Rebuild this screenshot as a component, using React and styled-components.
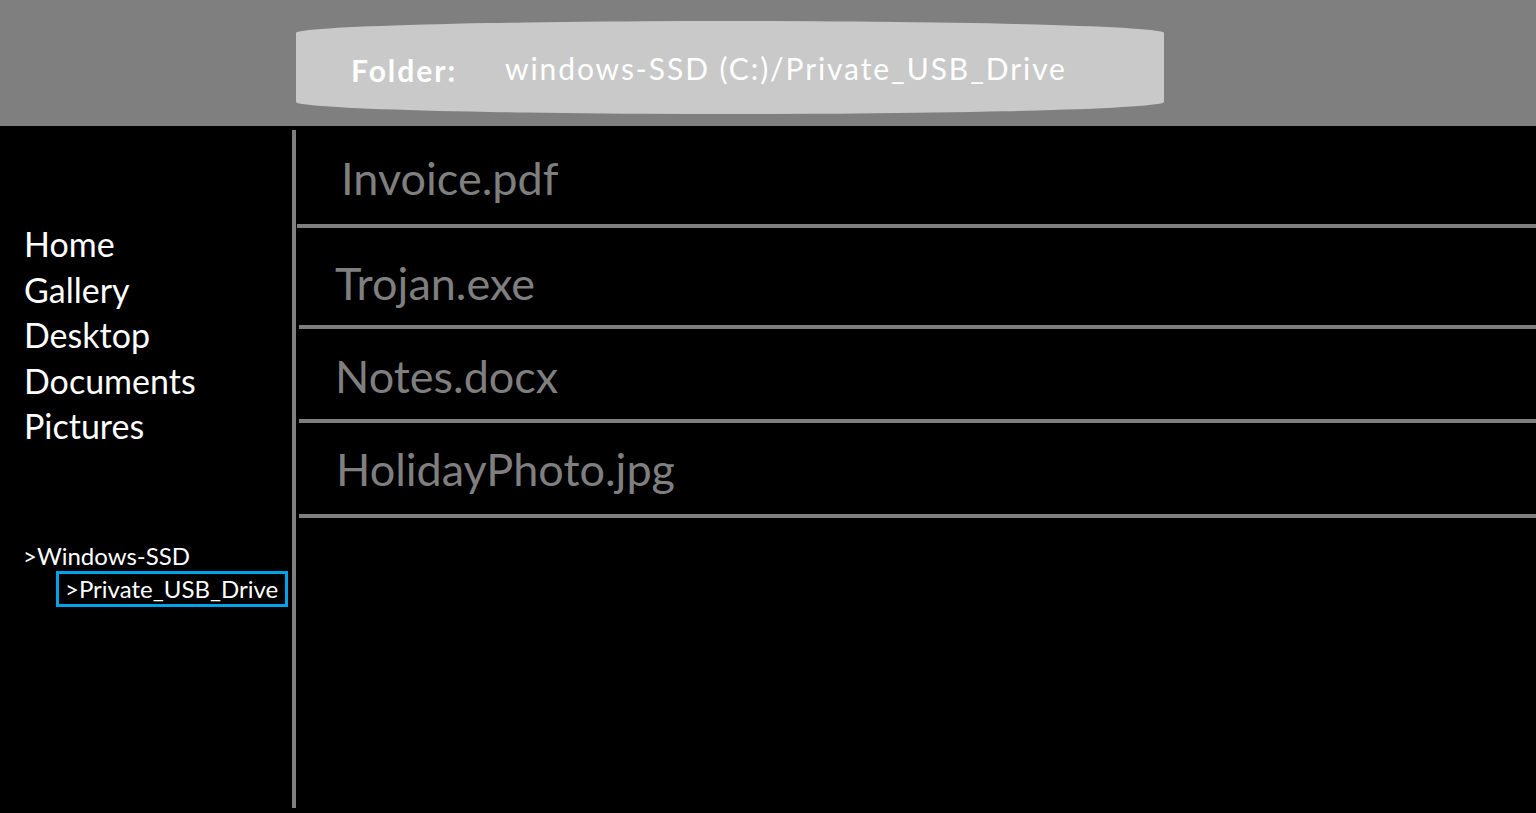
import styled, { createGlobalStyle } from "styled-components";

const GlobalStyle = createGlobalStyle`
  html, body {
    margin: 0;
    padding: 0;
    background: #000;
  }
  body {
    font-family: Lato, "Open Sans", sans-serif;
  }
`;

const Page = styled.div`
  width: 1536px;
  height: 813px;
  display: flex;
  flex-direction: column;
  background: #000;
  overflow: hidden;
`;

const Header = styled.header`
  height: 126px;
  flex-shrink: 0;
  background: #7f7f7f;
  display: flex;
  align-items: flex-start;
  padding-left: 296px;
  padding-top: 21px;
  box-sizing: border-box;
`;

const PathPill = styled.div`
  width: 868px;
  height: 93px;
  background: #c9c9c9;
  border-radius: 50% / 12px;
  display: flex;
  align-items: center;
  padding-left: 55px;
  box-sizing: border-box;
  color: #fff;
  font-size: 30px;
  letter-spacing: 1.9px;
  padding-top: 1px;
`;

const PathLabel = styled.span`
  font-weight: 700;
  width: 154px;
  font-size: 30px;
  letter-spacing: 2px;
  padding-top: 4px;
`;

const Body = styled.div`
  flex: 1;
  display: flex;
`;

const Sidebar = styled.nav`
  width: 292px;
  flex-shrink: 0;
  padding: 95px 0 0 24px;
  box-sizing: border-box;
  color: #fff;
`;

const NavItem = styled.div`
  font-size: 34px;
  line-height: 45.5px;
`;

const Tree = styled.div`
  margin-top: 92px;
  font-size: 24px;
`;

const TreeItem = styled.div`
  line-height: 30px;
  margin-left: ${(p) => (p.$depth ? 32 : -1)}px;
  padding-left: ${(p) => (p.$depth ? 6 : 0)}px;
  ${(p) =>
    p.$selected &&
    `
    width: 232px;
    box-sizing: border-box;
    border: 3px solid #00a2e8;
  `}
`;

const Divider = styled.div`
  width: 4px;
  background: #7f7f7f;
  margin: 4px 0 5px;
  flex-shrink: 0;
`;

const FileList = styled.section`
  flex: 1;
  display: flex;
  flex-direction: column;
`;

const FileRow = styled.div`
  height: ${(p) => p.$h}px;
  margin-left: ${(p) => p.$inset}px;
  border-bottom: 4px solid #7f7f7f;
  display: flex;
  align-items: center;
  padding-left: ${(p) => p.$pad}px;
  padding-top: ${(p) => p.$shift}px;
  color: #7f7f7f;
  font-size: 45px;
`;

const files = [
  { name: "Invoice.pdf", h: 98, inset: 1, pad: 44, offset: 3 },
  { name: "Trojan.exe", h: 97, inset: 3, pad: 36, offset: 6 },
  { name: "Notes.docx", h: 90, inset: 3, pad: 36, offset: 2 },
  { name: "HolidayPhoto.jpg", h: 91, inset: 3, pad: 37, offset: 0 },
];

export default function App() {
  return (
    <Page>
      <GlobalStyle />
      <Header>
        <PathPill>
          <PathLabel>Folder:</PathLabel>
          <span>windows-SSD (C:)/Private_USB_Drive</span>
        </PathPill>
      </Header>
      <Body>
        <Sidebar>
          {["Home", "Gallery", "Desktop", "Documents", "Pictures"].map((n) => (
            <NavItem key={n}>{n}</NavItem>
          ))}
          <Tree>
            <TreeItem $depth={0}>&gt;Windows-SSD</TreeItem>
            <TreeItem $depth={1} $selected>
              &gt;Private_USB_Drive
            </TreeItem>
          </Tree>
        </Sidebar>
        <Divider />
        <FileList>
          {files.map((f) => (
            <FileRow
              key={f.name}
              $h={f.h - f.offset * 2}
              $shift={f.offset * 2}
              $inset={f.inset}
              $pad={f.pad}
            >
              {f.name}
            </FileRow>
          ))}
        </FileList>
      </Body>
    </Page>
  );
}
